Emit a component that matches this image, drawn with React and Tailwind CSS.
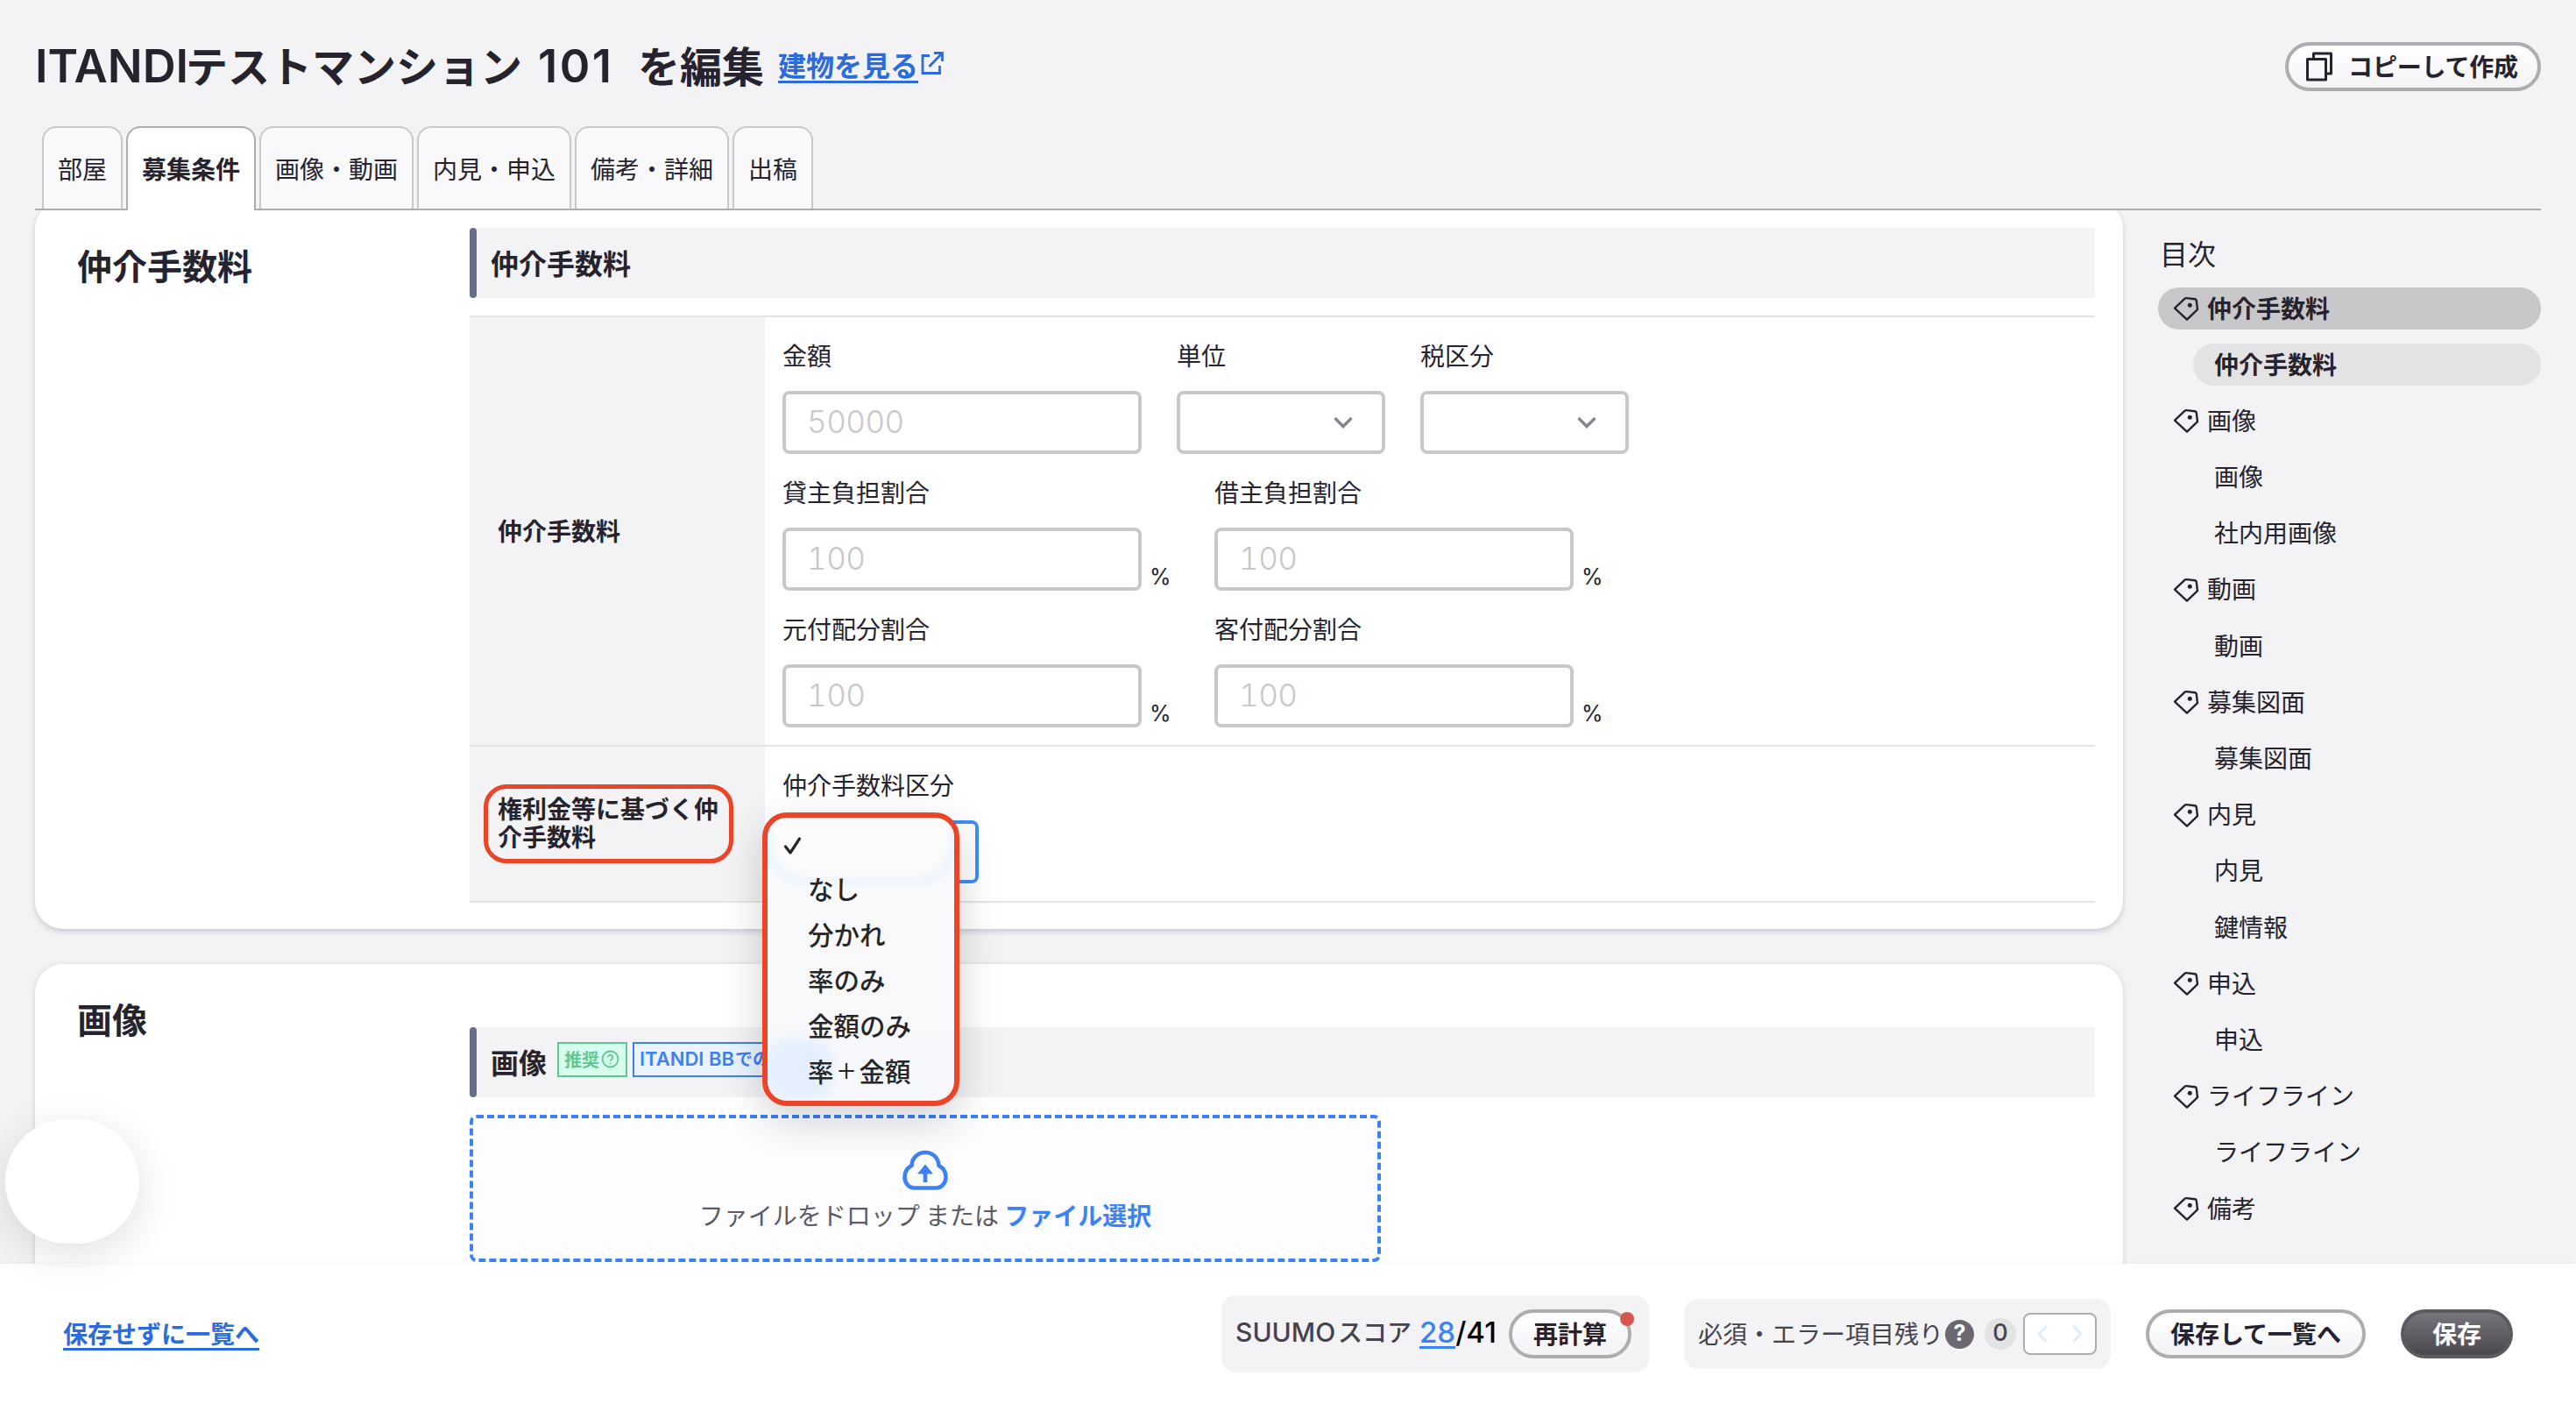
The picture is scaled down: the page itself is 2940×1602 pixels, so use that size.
import React from "react";

const tabs = ["部屋", "募集条件", "画像・動画", "内見・申込", "備考・詳細", "出稿"];

const toc = [
  { label: "仲介手数料", parent: true, active: true },
  { label: "仲介手数料", active: true },
  { label: "画像", parent: true },
  { label: "画像" },
  { label: "社内用画像" },
  { label: "動画", parent: true },
  { label: "動画" },
  { label: "募集図面", parent: true },
  { label: "募集図面" },
  { label: "内見", parent: true },
  { label: "内見" },
  { label: "鍵情報" },
  { label: "申込", parent: true },
  { label: "申込" },
  { label: "ライフライン", parent: true },
  { label: "ライフライン" },
  { label: "備考", parent: true },
];

const feeOptions = [
  "なし",
  "分かれ",
  "率のみ",
  "金額のみ",
  <>率<span className="w-[29px] text-center text-[24px]">＋</span>金額</>,
];

const TagIcon = () => (
  <svg className="h-[30px] w-[30px] shrink-0" viewBox="0 0 30 30" fill="none">
    <path d="M2 14.7 13.6 3.6Q14.3 3 15.3 3.1L25 4.2Q26.6 4.4 26.8 6L28 16.2 16 27.6Z" stroke="#26232f" strokeWidth="2.4" strokeLinejoin="round" />
    <circle cx="19.3" cy="11.3" r="2.5" fill="#26232f" />
  </svg>
);

const Chevron = () => (
  <svg className="h-[16px] w-[24px]" viewBox="0 0 24 16" fill="none" stroke="#85848d" strokeWidth="3.4">
    <path d="M2.5 3 12 12.5 21.5 3" />
  </svg>
);

const Label = ({ children }) => (
  <div className="flex h-[84px] items-center pt-[2px] text-[28px]">{children}</div>
);

const TextField = ({ label, placeholder, unit }) => (
  <div className="flex items-end">
    <div className="w-[410px]">
      <Label>{label}</Label>
      <div className="flex h-[72px] items-center rounded-lg border-4 border-[#c8c7cc] bg-white pb-[2px] pl-[24px] font-['Inter'] text-[35px] font-light tracking-[-0.5px] text-[#c8c7cc] tabular-nums">
        {placeholder}
      </div>
    </div>
    {unit && <span className="ml-[9px] w-[41px] font-['Inter'] text-[25px] leading-[32px]">{unit}</span>}
  </div>
);

const SelectField = ({ label }) => (
  <div className="w-[238px]">
    <Label>{label}</Label>
    <div className="flex h-[72px] items-center justify-end rounded-lg border-4 border-[#c8c7cc] bg-white pr-[32px]">
      <Chevron />
    </div>
  </div>
);

const SectionBar = ({ children }) => (
  <div className="flex h-[80px] bg-[#f3f3f5]">
    <div className="w-[8px] rounded-[4px] bg-[#656f8a]" />
    <div className="flex items-center pb-[3px] pl-[16px] text-[32px] font-bold">{children}</div>
  </div>
);

const PillButton = ({ className = "", children }) => (
  <button className={`flex h-[56px] items-center justify-center rounded-full border-4 border-[#adacb0] bg-linear-to-b from-white to-[#f3f3f6] pb-[3px] text-[28px] font-bold ${className}`}>
    {children}
  </button>
);

const FeeMenu = () => (
  <div className="absolute -left-[23px] -top-[9px] z-10 h-[335px] w-[225px] rounded-[28px] border-[6px] border-[#ec4426] bg-linear-to-b from-[#fcfcfd] via-[#f9f9fb] to-[#f7f8fc] text-[29.5px] font-medium text-[#262628] shadow-[0_16px_48px_rgba(0,0,0,0.18)]">
    <div className="absolute inset-0 overflow-hidden rounded-[22px]">
      <div className="absolute -inset-x-[3px] -top-[60px] h-[136px] rounded-[48px] border-[6px] border-[#e2f0ff] blur-[4px]" />
      <div className="absolute -left-[2px] bottom-[2px] h-[68px] w-[76px] rounded-[24px] bg-[#e3effe] blur-[7px]" />
    </div>
    <div className="relative flex flex-col pt-[6px]">
      <div className="flex h-[48px] items-center pl-[18px] pt-[3px]">
        <svg className="h-[22px] w-[22px]" viewBox="0 0 22 22" fill="none" stroke="#262628" strokeWidth="3.2" strokeLinecap="round" strokeLinejoin="round">
          <path d="M2.5 12 8 19 18.5 3" />
        </svg>
      </div>
      {feeOptions.map((option, i) => (
        <div key={i} className="flex h-[52px] items-center whitespace-nowrap pl-[46px]">
          {option}
        </div>
      ))}
    </div>
  </div>
);

const Header = () => (
  <header className="flex h-[144px] items-start justify-between pl-[40px] pr-[40px]">
    <div className="flex h-[146px] items-center">
      <h1 className="flex items-baseline whitespace-nowrap text-[48px] font-bold">
        <span className="w-[172px] font-['Inter'] text-[52.5px] leading-[60px] font-semibold">ITANDI</span>
        <span>テストマンション</span>
        <span className="ml-[18px] w-[114px] font-['Inter'] text-[52.5px] leading-[60px] font-semibold tracking-[2.5px]">101</span>
        <span>を編集</span>
      </h1>
      <a className="ml-[16px] flex text-[32px] font-bold text-[#2b6bdb]">
        <span className="underline decoration-[3px] underline-offset-[5px]">建物を見る</span>
        <svg className="ml-[3px] mt-[9px] h-[28px] w-[26px]" viewBox="0 0 26 28" fill="none" stroke="#2b6bdb" strokeWidth="2.8">
          <path d="M10 5.5H2V25.5H21.5V17" />
          <path d="M9.5 18 23 4M15 2.5H24.5V12" />
        </svg>
      </a>
    </div>
    <PillButton className="mt-[48px] w-[292px] pr-[3px] tracking-[-0.2px]">
      <svg className="mr-[17px] mt-[3px] h-[34px] w-[32px]" viewBox="0 0 32 34" fill="none" stroke="#26232f" strokeWidth="3" strokeLinejoin="round">
        <path d="M9.5 8V2H29.5V25H24.5" />
        <rect x="2.5" y="8.500" width="21" height="23.500" />
      </svg>
      コピーして作成
    </PillButton>
  </header>
);

const Tabs = () => (
  <nav className="relative z-10 mx-[40px] flex h-[96px] gap-[4px] border-b-2 border-[#adacb0] pl-[8px] text-[28px]">
    {tabs.map((tab) => (
      <div
        key={tab}
        className={
          tab === "募集条件"
            ? "flex h-[96px] items-center rounded-t-[16px] border-2 border-b-0 border-[#adacb0] bg-white px-[16px] pb-[2px] font-bold"
            : "flex h-[94px] items-center rounded-t-[16px] border-2 border-b-0 border-[#c8c7cb] bg-[#f9f9fc] px-[16px]"
        }
      >
        {tab}
      </div>
    ))}
  </nav>
);

const FeeCard = () => (
  <section className="-mt-[11px] flex h-[831px] shrink-0 rounded-[32px] bg-white pl-[48px] pr-[32px] pt-[31px] shadow-[0_3px_6px_rgba(38,35,60,0.2)]">
    <h2 className="w-[448px] pt-[12px] text-[40px] leading-[60px] font-bold">仲介手数料</h2>
    <div className="flex-1">
      <SectionBar>仲介手数料</SectionBar>
      <div className="mt-[20px] border-y-2 border-[#e3e3e4]">
        <div className="flex h-[488px]">
          <div className="flex w-[337px] items-center bg-[#f3f3f5] pb-[3px] pl-[32px] text-[28px] font-bold">仲介手数料</div>
          <div className="pl-[20px]">
            <div className="flex gap-[40px]">
              <TextField label="金額" placeholder="50000" />
              <SelectField label="単位" />
              <SelectField label="税区分" />
            </div>
            <div className="flex gap-[33px]">
              <TextField label="貸主負担割合" placeholder="100" unit="%" />
              <TextField label="借主負担割合" placeholder="100" unit="%" />
            </div>
            <div className="flex gap-[33px]">
              <TextField label="元付配分割合" placeholder="100" unit="%" />
              <TextField label="客付配分割合" placeholder="100" unit="%" />
            </div>
          </div>
        </div>
        <div className="flex h-[178px] border-t-2 border-[#e3e3e4]">
          <div className="flex w-[337px] items-center bg-[#f3f3f5] pl-[16px]">
            <div className="h-[90px] w-[285px] rounded-[26px] border-[5px] border-[#ec4426] pl-[11px] pt-[6px] text-[28px] leading-[32px] font-bold">
              権利金等に基づく仲介手数料
            </div>
          </div>
          <div className="pl-[20px]">
            <Label>仲介手数料区分</Label>
            <div className="relative h-[72px] w-[224px]">
              <div className="h-[72px] rounded-lg border-4 border-[#3f8df8] bg-white" />
              <FeeMenu />
            </div>
          </div>
        </div>
      </div>
    </div>
  </section>
);

const ImageCard = () => (
  <section className="flex h-[500px] shrink-0 rounded-[32px] bg-white pl-[48px] pr-[32px] shadow-[0_1px_6px_rgba(38,35,60,0.16)]">
    <h2 className="w-[448px] pt-[32px] text-[40px] leading-[60px] font-bold">画像</h2>
    <div className="flex-1 pt-[72px]">
      <SectionBar>
        画像
        <span className="ml-[12px] mt-[-3px] flex h-[40px] w-[80px] items-center border-2 border-[#5fc78f] bg-[#d7fdee] pb-[1px] pl-[6px] text-[20px] text-[#5fc78f]">
          推奨
          <svg className="ml-[2px] h-[21px] w-[21px]" viewBox="0 0 21 21" fill="none" stroke="#5fc78f" strokeWidth="1.8">
            <circle cx="10.5" cy="10.5" r="9" />
            <path d="M7.8 8.5a2.7 2.7 0 1 1 4.300 2.1c-1 .7-1.600 1.100-1.600 2.200M10.500 14.500v1.800" />
          </svg>
        </span>
        <span className="ml-[6px] mt-[-3px] flex h-[40px] w-[228px] items-center whitespace-nowrap border-2 border-[#3b82f6] bg-[#ebf3ff] pb-[2px] pl-[6px] text-[20px] text-[#3b82f6]">
          <span className="w-[109px] font-['Inter'] text-[22px] font-semibold">ITANDI BB</span>での
        </span>
      </SectionBar>
      <div className="mt-[20px] flex h-[168px] w-[1040px] flex-col items-center rounded-lg border-4 border-dashed border-[#3b82f6] bg-[#fdfdff] pt-[34px]">
        <svg className="h-[50px] w-[56px]" viewBox="0 0 56 50" fill="none">
          <path d="M16 45.500C8.500 45.500 4.500 39 4.500 33 4.500 27 7.500 22.500 12.500 20 13 11 19.500 5 28 5S43 11 43.500 20C48.500 22.500 51.500 27 51.500 33 51.500 39 47.500 45.500 40 45.500Z" stroke="#3b82f6" strokeWidth="4.6" strokeLinejoin="round" />
          <path d="M28 18.500 37 29.500H30.300V39H25.700V29.500H19Z" fill="#3b82f6" />
        </svg>
        <p className="mt-[5px] text-[28px] leading-[42px] text-[#5c5a63]">
          ファイルをドロップ または <b className="text-[#3b82f6]">ファイル選択</b>
        </p>
      </div>
    </div>
  </section>
);

const TableOfContents = () => (
  <aside className="ml-[40px] w-[437px] shrink-0 pt-[24px]">
    <p className="pl-[2px] text-[32px] leading-[48px]">目次</p>
    <ul className="mt-[16px] flex flex-col gap-[16.2px] text-[28px]">
      {toc.map((item, i) => (
        <li
          key={i}
          className={`flex h-[48px] items-center rounded-full ${item.parent ? "gap-[9px] pl-[17px]" : "ml-[40px] pl-[24px]"} ${
            item.active ? (item.parent ? "bg-[#c8c8ca] font-bold" : "bg-[#e3e3e4] font-bold") : ""
          }`}
        >
          {item.parent && <TagIcon />}
          <span className="mb-[3px]">{item.label}</span>
        </li>
      ))}
    </ul>
  </aside>
);

const Footer = () => (
  <footer className="relative z-20 flex h-[160px] items-center bg-white pl-[72px] pr-[72px] text-[28px] shadow-[0_-1px_4px_rgba(0,0,0,0.04)]">
    <a className="mb-[3px] font-bold text-[#2b6bdb] underline decoration-[3px] underline-offset-[5px]">保存せずに一覧へ</a>
    <div className="ml-auto flex h-[88px] w-[488px] items-center rounded-[16px] bg-[#f3f3f5] pl-[16px]">
      <span className="mb-[3px] flex items-baseline font-medium text-[#45434d]">
        <span className="w-[117px] font-['Inter'] text-[30px]">SUUMO</span>スコア
      </span>
      <span className="mb-[2px] ml-[9px] w-[102px] whitespace-nowrap font-['Inter'] text-[33px] font-medium text-black">
        <span className="text-[#3b82f6] underline decoration-[3px] underline-offset-[4px]">28</span>/41
      </span>
      <div className="relative">
        <PillButton className="w-[140px] text-[#26232f]">再計算</PillButton>
        <span className="absolute -right-[3px] top-[3px] h-[16px] w-[16px] rounded-full bg-[#d9534f]" />
      </div>
    </div>
    <div className="ml-[40px] flex h-[80px] w-[487px] items-center rounded-[16px] bg-[#f3f3f5] pl-[16px] text-[#45434d]">
      <span className="mb-[3px]">必須・エラー項目残り</span>
      <span className="ml-[2px] flex h-[33px] w-[33px] items-center justify-center rounded-full bg-[#6b6872] font-['Inter'] text-[25px] font-bold text-white">?</span>
      <span className="ml-[12px] flex h-[36px] w-[36px] items-center justify-center rounded-full bg-[#e3e3e4] pb-[2px] font-['Inter'] text-[27px] font-medium">0</span>
      <span className="ml-[8px] flex h-[48px] w-[84px] items-center justify-between rounded-[8px] border-2 border-[#adacb0] bg-white px-[13px]">
        <svg className="h-[22px] w-[14px]" viewBox="0 0 14 22" fill="none" stroke="#dcefff" strokeWidth="3"><path d="M12 2 3 11 12 20" /></svg>
        <svg className="h-[22px] w-[14px]" viewBox="0 0 14 22" fill="none" stroke="#dcefff" strokeWidth="3"><path d="M2 2 11 11 2 20" /></svg>
      </span>
    </div>
    <PillButton className="ml-[40px] w-[251px]">保存して一覧へ</PillButton>
    <button className="ml-[40px] flex h-[56px] w-[128px] items-center justify-center rounded-full border-4 border-[#5c5961] bg-linear-to-b from-[#78767d] to-[#4a474f] pb-[3px] font-bold text-white">
      保存
    </button>
  </footer>
);

export default function App() {
  return (
    <div className="relative flex h-[1602px] w-[2940px] flex-col overflow-hidden bg-[#f3f3f6] font-['Noto_Sans_CJK_JP',sans-serif] text-[#26232f]">
      <Header />
      <Tabs />
      <main className="flex h-[1202px] overflow-hidden pl-[40px]">
        <div className="flex w-[2383px] shrink-0 flex-col gap-[40px]">
          <FeeCard />
          <ImageCard />
        </div>
        <TableOfContents />
      </main>
      <Footer />
      {/* floating widget, its shadow falls over the footer */}
      <div className="absolute left-[6px] top-[1277px] z-30 h-[142px] w-[153px] rounded-full bg-white shadow-[0_12px_48px_rgba(0,0,0,0.12)]" />
    </div>
  );
}
